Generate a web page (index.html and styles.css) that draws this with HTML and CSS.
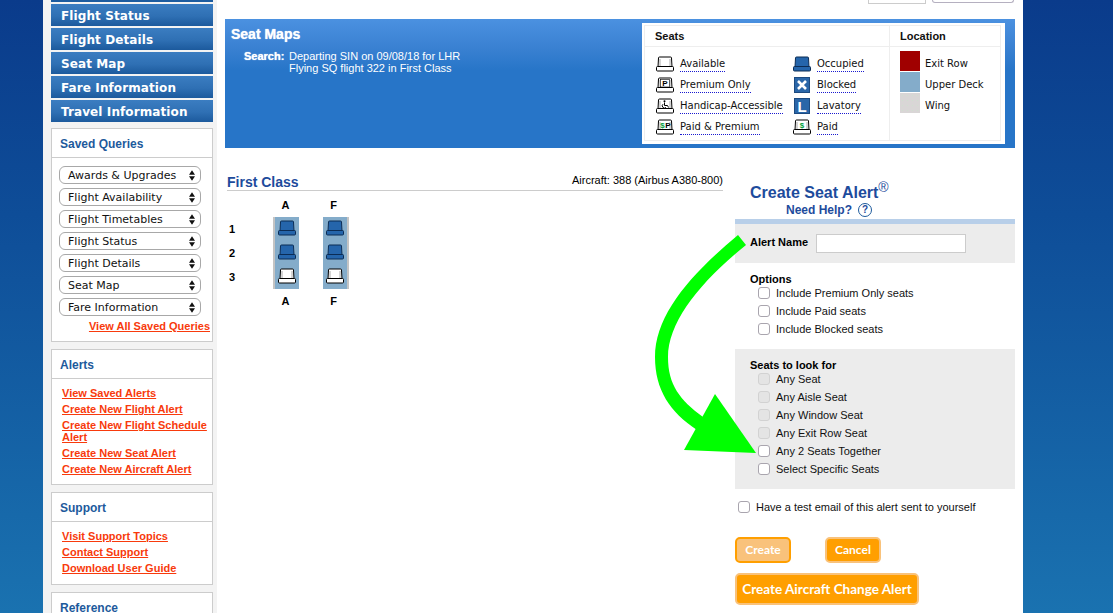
FILE: index.html
```html
<!DOCTYPE html>
<html lang="en">
<head>
<meta charset="utf-8">
<title>Seat Maps</title>
<link rel="stylesheet" href="styles.css">
</head>
<body>
<svg class="defs" width="0" height="0" aria-hidden="true">
  <symbol id="seat" viewBox="0 0 18 16">
    <path d="M2 11L2.5 2Q2.5 1 3.5 1H14.5Q15.5 1 15.5 2L16 11" fill="#fff" stroke="#000"/>
    <path d="M4 10V3M14 10V3" stroke="#aaa" fill="none"/>
    <path d="M1.5 10.5H16.5Q17.5 10.5 17.5 11.5V14Q17.5 15 16.5 15H1.5Q0.5 15 0.5 14V11.5Q0.5 10.5 1.5 10.5Z" fill="#fff" stroke="#000"/>
  </symbol>
  <symbol id="seat-taken" viewBox="0 0 18 16">
    <path d="M2 11L2.5 2Q2.5 1 3.5 1H14.5Q15.5 1 15.5 2L16 11" fill="#2565ab" stroke="#0b2c55"/>
    <path d="M1.5 10.5H16.5Q17.5 10.5 17.5 11.5V14Q17.5 15 16.5 15H1.5Q0.5 15 0.5 14V11.5Q0.5 10.5 1.5 10.5Z" fill="#2565ab" stroke="#0b2c55"/>
  </symbol>
</svg>
<div class="page">
  <aside class="sidebar">
    <nav class="nav">
      <a class="nav-stub"></a>
      <a class="nav-item">Flight Status</a>
      <a class="nav-item">Flight Details</a>
      <a class="nav-item">Seat Map</a>
      <a class="nav-item">Fare Information</a>
      <a class="nav-item">Travel Information</a>
    </nav>
    <section class="box box-queries">
      <h3 class="box-title">Saved Queries</h3>
      <div class="queries">
        <div class="select"><span>Awards &amp; Upgrades</span><svg class="updown" viewBox="0 0 7 12"><path d="M3.5 0L7 5H0zM3.5 12L0 7H7z"/></svg></div>
        <div class="select"><span>Flight Availability</span><svg class="updown" viewBox="0 0 7 12"><path d="M3.5 0L7 5H0zM3.5 12L0 7H7z"/></svg></div>
        <div class="select"><span>Flight Timetables</span><svg class="updown" viewBox="0 0 7 12"><path d="M3.5 0L7 5H0zM3.5 12L0 7H7z"/></svg></div>
        <div class="select"><span>Flight Status</span><svg class="updown" viewBox="0 0 7 12"><path d="M3.5 0L7 5H0zM3.5 12L0 7H7z"/></svg></div>
        <div class="select"><span>Flight Details</span><svg class="updown" viewBox="0 0 7 12"><path d="M3.5 0L7 5H0zM3.5 12L0 7H7z"/></svg></div>
        <div class="select"><span>Seat Map</span><svg class="updown" viewBox="0 0 7 12"><path d="M3.5 0L7 5H0zM3.5 12L0 7H7z"/></svg></div>
        <div class="select"><span>Fare Information</span><svg class="updown" viewBox="0 0 7 12"><path d="M3.5 0L7 5H0zM3.5 12L0 7H7z"/></svg></div>
      </div>
      <a class="link link-all">View All Saved Queries</a>
    </section>
    <section class="box box-alerts">
      <h3 class="box-title">Alerts</h3>
      <ul class="links">
        <li><a class="link">View Saved Alerts</a></li>
        <li><a class="link">Create New Flight Alert</a></li>
        <li><a class="link">Create New Flight Schedule Alert</a></li>
        <li><a class="link">Create New Seat Alert</a></li>
        <li><a class="link">Create New Aircraft Alert</a></li>
      </ul>
    </section>
    <section class="box box-support">
      <h3 class="box-title">Support</h3>
      <ul class="links">
        <li><a class="link">Visit Support Topics</a></li>
        <li><a class="link">Contact Support</a></li>
        <li><a class="link">Download User Guide</a></li>
      </ul>
    </section>
    <section class="box box-reference">
      <h3 class="box-title">Reference</h3>
    </section>
  </aside>

  <main class="main">
    <div class="topbar">
      <div class="top-input"></div>
      <div class="top-select"></div>
    </div>
    <header class="banner">
      <div class="banner-text">
        <h1 class="banner-title">Seat Maps</h1>
        <div class="search">
          <b class="search-label">Search:</b>
          <p class="search-value">Departing SIN on 09/08/18 for LHR<br>Flying SQ flight 322 in First Class</p>
        </div>
      </div>
      <div class="legend">
        <div class="legend-grid">
          <div class="legend-head">Seats</div>
          <div class="legend-head legend-right">Location</div>
          <div class="legend-seats">
            <div class="key"><svg class="seat-icon"><use href="#seat"/></svg><span class="key-label">Available</span></div>
            <div class="key"><svg class="seat-icon"><use href="#seat-taken"/></svg><span class="key-label">Occupied</span></div>
            <div class="key"><svg class="seat-icon" viewBox="0 0 18 16"><use href="#seat"/><rect x="4.5" y="2.5" width="9" height="7.5" fill="#fff" stroke="#000" stroke-width="0.6"/><text x="9" y="9.3" class="seat-mark">P</text></svg><span class="key-label">Premium Only</span></div>
            <div class="key"><svg class="seat-icon blocked" viewBox="0 0 16 16"><rect width="16" height="16" fill="#2a66a8"/><rect x="0.5" y="0.5" width="15" height="15" fill="none" stroke="#1c4a80"/><path d="M4 4L12 12M12 4L4 12" stroke="#fff" stroke-width="2.6"/></svg><span class="key-label">Blocked</span></div>
            <div class="key"><svg class="seat-icon" viewBox="0 0 18 16"><use href="#seat"/><circle cx="8.5" cy="3.3" r="1" fill="#000"/><path d="M8.5 4.5V7.5H11.5L12.5 9.5M7 6.2A2.2 2.2 0 1 0 10 9.5" fill="none" stroke="#000"/></svg><span class="key-label">Handicap-Accessible</span></div>
            <div class="key"><svg class="seat-icon blocked" viewBox="0 0 16 16"><rect width="16" height="16" fill="#2a66a8"/><rect x="0.5" y="0.5" width="15" height="15" fill="none" stroke="#1c4a80"/><text x="8" y="13.5" class="lav-mark">L</text></svg><span class="key-label">Lavatory</span></div>
            <div class="key"><svg class="seat-icon" viewBox="0 0 18 16"><use href="#seat"/><text x="6.5" y="9.3" class="seat-mark seat-mark-green">$</text><text x="12" y="9.3" class="seat-mark">P</text></svg><span class="key-label">Paid &amp; Premium</span></div>
            <div class="key"><svg class="seat-icon" viewBox="0 0 18 16"><use href="#seat"/><text x="9" y="9.3" class="seat-mark seat-mark-green">$</text></svg><span class="key-label">Paid</span></div>
          </div>
          <div class="legend-location">
            <div class="loc"><span class="swatch swatch-exit"></span><span class="loc-label">Exit Row</span></div>
            <div class="loc"><span class="swatch swatch-deck"></span><span class="loc-label">Upper Deck</span></div>
            <div class="loc"><span class="swatch swatch-wing"></span><span class="loc-label">Wing</span></div>
          </div>
        </div>
      </div>
    </header>

    <div class="content">
      <section class="seatmap">
        <div class="cabin-head">
          <h2 class="cabin-title">First Class</h2>
          <span class="aircraft">Aircraft: 388 (Airbus A380-800)</span>
        </div>
        <div class="plan">
          <div class="plan-labels">
            <span>1</span><span>2</span><span>3</span>
          </div>
          <div class="plan-col">
            <b class="col-letter">A</b>
            <div class="col-seats col-left">
              <svg class="map-seat"><use href="#seat-taken"/></svg>
              <svg class="map-seat"><use href="#seat-taken"/></svg>
              <svg class="map-seat"><use href="#seat"/></svg>
            </div>
            <b class="col-letter">A</b>
          </div>
          <div class="plan-col">
            <b class="col-letter col-letter-f">F</b>
            <div class="col-seats col-right">
              <svg class="map-seat"><use href="#seat-taken"/></svg>
              <svg class="map-seat"><use href="#seat-taken"/></svg>
              <svg class="map-seat"><use href="#seat"/></svg>
            </div>
            <b class="col-letter col-letter-f">F</b>
          </div>
        </div>
      </section>

      <section class="alert">
        <h2 class="alert-title">Create Seat Alert<sup class="reg">®</sup></h2>
        <div class="help">Need Help?<span class="help-icon">?</span></div>
        <div class="alert-name">
          <label class="strong alert-label">Alert Name</label>
          <input class="name-input" type="text">
        </div>
        <div class="options">
          <div class="strong">Options</div>
          <label class="check"><input type="checkbox">Include Premium Only seats</label>
          <label class="check"><input type="checkbox">Include Paid seats</label>
          <label class="check"><input type="checkbox">Include Blocked seats</label>
        </div>
        <div class="seats-for">
          <div class="strong">Seats to look for</div>
          <label class="check"><input type="checkbox" disabled>Any Seat</label>
          <label class="check"><input type="checkbox" disabled>Any Aisle Seat</label>
          <label class="check"><input type="checkbox" disabled>Any Window Seat</label>
          <label class="check"><input type="checkbox" disabled>Any Exit Row Seat</label>
          <label class="check"><input type="checkbox">Any 2 Seats Together</label>
          <label class="check"><input type="checkbox">Select Specific Seats</label>
        </div>
        <label class="check check-test"><input type="checkbox">Have a test email of this alert sent to yourself</label>
        <div class="actions">
          <button class="btn btn-off" type="button">Create</button>
          <button class="btn" type="button">Cancel</button>
        </div>
        <button class="btn btn-big" type="button">Create Aircraft Change Alert</button>
      </section>
    </div>
  </main>
</div>
<svg class="arrow" width="1113" height="613" viewBox="0 0 1113 613" aria-hidden="true">
  <path d="M738 235C690 275 655 315 655 357C655 390 670 412 697 430L703 417C680 400 668 385 668 357C668 322 700 282 746 245Z" fill="#00ff00"/>
  <path d="M715 394L756 453L684 450Z" fill="#00ff00"/>
</svg>
</body>
</html>
```
FILE: styles.css
```css
* { box-sizing: border-box; }
html, body { height: 100%; }
body {
  margin: 0;
  height: 613px;
  overflow: hidden;
  position: relative;
  background: linear-gradient(180deg, #0a3b8b 0%, #0e4d98 35%, #1a72b0 100%);
  font-family: "Liberation Sans", Arial, sans-serif;
  font-size: 11px;
  color: #000;
}
.defs { position: absolute; }
.arrow { position: absolute; left: 0; top: 0; pointer-events: none; }
.page {
  margin-left: 43px;
  width: 980px;
  height: 613px;
  display: flex;
  background: #fff;
  overflow: hidden;
}

/* Sidebar */
.sidebar {
  width: 174px;
  flex: none;
  padding: 0 4px 0 8px;
  background: #f3f3f3;
  display: flex;
  flex-direction: column;
}
.nav { display: flex; flex-direction: column; gap: 2px; flex: none; }
.nav-stub { height: 2px; background: #1d5c9f; }
.nav-item {
  height: 22px;
  padding: 1px 0 0 10px;
  display: flex;
  align-items: center;
  background: linear-gradient(180deg, #3b7dc1 0%, #2f70b4 55%, #1c5a9d 100%);
  color: #fff;
  font-family: "DejaVu Sans", Verdana, sans-serif;
  font-weight: bold;
  font-size: 12px;
  letter-spacing: 0.1px;
}
.box {
  margin-top: 7px;
  flex: none;
  background: #fff;
  border: 1px solid #ccc;
}
.box-queries { margin-top: 6px; height: 214px; }
.box-alerts { height: 136px; }
.box-support { height: 93px; }
.box-reference { height: 60px; }
.box-title {
  margin: 0;
  height: 29px;
  padding: 1px 0 0 8px;
  display: flex;
  align-items: center;
  border-bottom: 1px solid #ccc;
  color: #1d5a9c;
  font-size: 12px;
  font-weight: bold;
}
.queries { display: flex; flex-direction: column; gap: 4px; padding: 8px 0 0 7px; }
.select {
  width: 142px;
  height: 18px;
  padding: 0 5px 0 8px;
  border: 1px solid #a8a8a8;
  border-radius: 6px;
  background: #fff;
  display: flex;
  align-items: center;
  justify-content: space-between;
  font-family: "DejaVu Sans", Verdana, sans-serif;
  font-size: 11px;
  color: #111;
}
.updown { width: 6px; height: 11px; fill: #111; }
.link {
  color: #f83a0c;
  font-weight: bold;
  font-size: 11px;
  line-height: 12px;
  text-decoration: underline;
}
.link-all { display: block; margin-top: 4px; padding-right: 2px; text-align: right; }
.links {
  list-style: none;
  margin: 0;
  padding: 8px 4px 0 10px;
  display: flex;
  flex-direction: column;
  gap: 4px;
}
.links li { line-height: 12px; }

/* Main */
.main { flex: 1; min-width: 0; padding: 0 8px; display: flex; flex-direction: column; }
.topbar { height: 19px; flex: none; display: flex; justify-content: flex-end; gap: 6px; padding-right: 1px; align-items: flex-start; }
.top-input { width: 58px; height: 4px; border: 1px solid #ccc; border-top: 0; }
.top-select { width: 82px; height: 3px; border: 1px solid #b5b0c0; border-top: 0; border-radius: 0 0 4px 4px; }
.banner {
  height: 129px;
  flex: none;
  display: flex;
  justify-content: space-between;
  background: linear-gradient(180deg, #4b91e0 0%, #3a81d2 22%, #2775c8 40%, #2775c8 100%);
  color: #fff;
}
.banner-text { padding: 7px 0 0 6px; }
.banner-title { margin: 0; font-size: 14px; line-height: 16px; font-weight: bold; text-shadow: 0 0 1px #fff; }
.search { display: flex; margin: 8px 0 0 13px; line-height: 12px; }
.search-label { width: 45px; text-shadow: 0 0 1px #fff; }
.search-value { margin: 0; }
.legend {
  margin: 4px 10px 0 0;
  width: 363px;
  height: 121px;
  padding: 2px 4px 3px 2px;
  background: #fff;
  color: #111;
}
.legend-grid {
  height: 100%;
  display: grid;
  grid-template-columns: 244px 111px;
  grid-template-rows: 21px 1fr;
  border: 1px solid #eee;
}
.legend-head {
  padding: 0 0 0 10px;
  display: flex;
  align-items: center;
  border-bottom: 1px solid #eee;
  font-weight: bold;
}
.legend-right { border-left: 1px solid #eee; }
.legend-seats {
  padding: 6px 0 0 11px;
  display: grid;
  grid-template-columns: 137px 1fr;
  grid-auto-rows: 21px;
}
.key { display: flex; align-items: center; gap: 6px; }
.seat-icon { width: 18px; height: 16px; flex: none; }
.seat-icon.blocked { width: 16px; height: 16px; margin: 0 1px 0 1px; }
.key-label {
  font-family: "DejaVu Sans", Verdana, sans-serif;
  font-size: 10px;
  line-height: 12px;
  border-bottom: 1px dotted #1a1ad0;
  padding-bottom: 1px;
  margin-top: 2px;
}
.seat-mark { font: bold 8px "Liberation Sans", sans-serif; text-anchor: middle; fill: #000; }
.seat-mark-green { fill: #00a040; }
.lav-mark { font: bold 15px "Liberation Sans", sans-serif; text-anchor: middle; fill: #fff; }
.legend-location {
  border-left: 1px solid #eee;
  padding: 4px 0 0 10px;
  display: flex;
  flex-direction: column;
  gap: 1px;
}
.loc { display: flex; gap: 5px; height: 20px; }
.swatch { width: 20px; height: 20px; flex: none; }
.swatch-exit { background: #a00000; }
.swatch-deck { background: #84acca; }
.swatch-wing {
  background-color: #d9d6d6;
  background-image: radial-gradient(#cfe0cf 0.6px, transparent 0.8px);
  background-size: 5px 5px;
}
.loc-label { font-family: "DejaVu Sans", Verdana, sans-serif; font-size: 10px; line-height: 12px; padding-top: 7px; }

/* Content */
.content { display: flex; flex: 1; min-height: 0; }
.seatmap { width: 496px; margin-left: 2px; padding-top: 26px; flex: none; }
.cabin-head {
  height: 16px;
  display: flex;
  justify-content: space-between;
  align-items: flex-start;
  border-bottom: 1px solid #ccc;
  box-sizing: content-box;
}
.cabin-title { margin: 0; font-size: 14px; line-height: 16px; color: #1d4b9c; font-weight: bold; }
.aircraft { line-height: 12px; }
.plan { display: flex; margin-top: 8px; }
.plan-labels {
  width: 46px;
  padding: 18px 0 0 2px;
  display: flex;
  flex-direction: column;
  font-weight: bold;
  font-size: 11px;
  line-height: 24px;
}
.plan-col { width: 26px; margin-right: 24px; display: flex; flex-direction: column; align-items: center; }
.col-letter { height: 12px; line-height: 12px; font-size: 11px; margin-right: 1px; }
.col-letter-f { margin-right: 5px; }
.col-seats {
  margin: 6px 0;
  width: 26px;
  height: 72px;
  padding-top: 3px;
  background: #84acca;
  display: flex;
  flex-direction: column;
  align-items: center;
  gap: 8px;
}
.col-left { border-left: 2px solid #c4c4c4; }
.col-right { border-right: 2px solid #c4c4c4; }
.map-seat { width: 18px; height: 16px; flex: none; }

/* Alert panel */
.alert { width: 280px; margin-left: 12px; flex: none; padding-top: 36px; }
.alert-title { margin: 0 0 0 15px; font-size: 16px; line-height: 17px; color: #1d4b9c; font-weight: bold; }
.reg { font-size: 14px; font-weight: normal; line-height: 0; }
.help {
  height: 17px;
  padding-left: 51px;
  display: flex;
  align-items: center;
  gap: 6px;
  color: #1d4b9c;
  font-size: 12px;
  font-weight: bold;
}
.help-icon {
  width: 14px;
  height: 14px;
  border: 1.5px solid #1d5a9c;
  border-radius: 50%;
  display: flex;
  align-items: center;
  justify-content: center;
  font-size: 10px;
}
.strong { font-weight: bold; line-height: 12px; }
.alert-name {
  margin-top: 1px;
  height: 44px;
  padding-left: 15px;
  border-top: 5px solid #b8cfe9;
  background: #ececec;
  display: flex;
  align-items: center;
  gap: 8px;
}
.alert-label { margin-bottom: 4px; }
.name-input { width: 150px; height: 19px; margin: 0; padding: 0; border: 1px solid #ccc; background: #fff; border-radius: 0; }
.options { padding: 10px 0 11px 15px; }
.seats-for { height: 140px; padding: 10px 0 0 15px; background: #ececec; }
.check { display: flex; align-items: center; height: 18px; padding-left: 8px; color: #111; }
.check input {
  appearance: none;
  width: 12px;
  height: 12px;
  margin: 0 6px 0 0;
  background: #fff;
  border: 1px solid #a9a5ae;
  border-radius: 3px;
  flex: none;
}
.check input:disabled { background: #e4e4e4; border-color: #d2d2d2; }
.options .strong + .check { margin-top: -1px; }
.seats-for .strong + .check { margin-top: -1px; }
.check-test { margin-top: 9px; padding-left: 3px; }
.actions { display: flex; gap: 34px; margin-top: 21px; }
.btn {
  width: 56px;
  height: 26px;
  padding: 0 0 1px;
  background: #ff9f00;
  border: 2px solid #f9c27b;
  border-radius: 5px;
  color: #fff;
  font-family: "Lato", "Open Sans", sans-serif;
  font-weight: bold;
  font-size: 12px;
}
.btn-off { background: #f9c27b; border-color: #ff9f00; }
.btn-big { display: block; width: 184px; height: 32px; margin-top: 10px; font-size: 13.5px; white-space: nowrap; }
```
